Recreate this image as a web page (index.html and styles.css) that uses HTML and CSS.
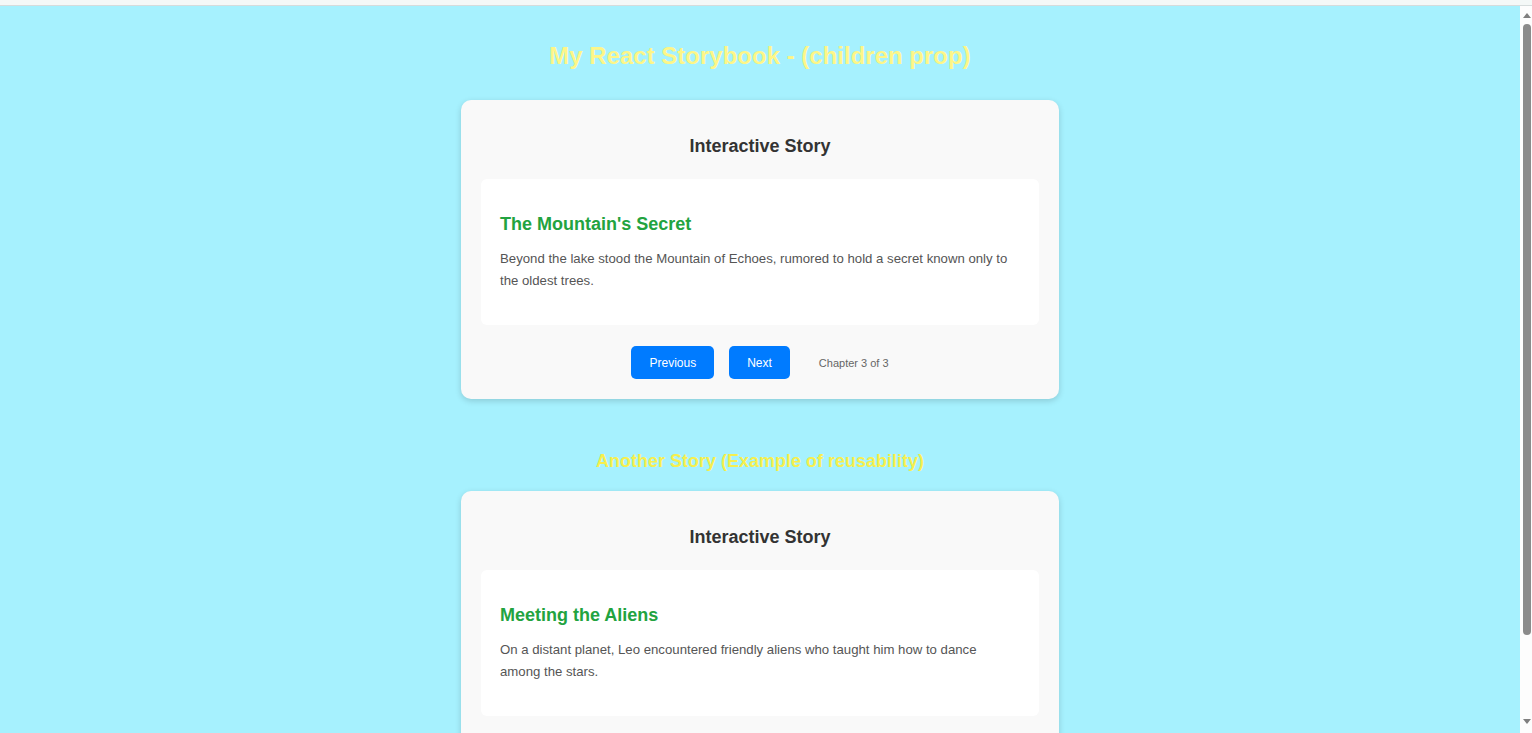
FILE: index.html
```html
<!DOCTYPE html>
<html lang="en">
<head>
<meta charset="utf-8">
<title>My React Storybook</title>
<link rel="stylesheet" href="styles.css">
</head>
<body>
  <div class="chrome-top"></div>
  <div class="frame">
    <main class="page">
      <div class="app">
        <h1 class="app-title">My React Storybook - (children prop)</h1>

        <section class="story-card">
          <h2 class="story-card-title">Interactive Story</h2>
          <div class="chapter">
            <h3 class="chapter-title">The Mountain's Secret</h3>
            <p class="chapter-text">Beyond the lake stood the Mountain of Echoes, rumored to hold a secret known only to the oldest trees.</p>
          </div>
          <div class="controls">
            <button class="btn">Previous</button>
            <button class="btn">Next</button>
            <span class="progress">Chapter 3 of 3</span>
          </div>
        </section>

        <h2 class="section-title">Another Story (Example of reusability)</h2>

        <section class="story-card story-card-below-fold">
          <h2 class="story-card-title">Interactive Story</h2>
          <div class="chapter">
            <h3 class="chapter-title">Meeting the Aliens</h3>
            <p class="chapter-text">On a distant planet, Leo encountered friendly aliens who taught him how to dance among the stars.</p>
          </div>
        </section>
      </div>
    </main>
    <div class="scrollbar">
      <div class="sb-btn"><span class="sb-arrow-up"></span></div>
      <div class="sb-track"><div class="sb-thumb"></div></div>
      <div class="sb-btn sb-btn-down"><span class="sb-arrow-down"></span></div>
    </div>
  </div>
</body>
</html>
```
FILE: styles.css
```css
html, body {
  margin: 0;
  padding: 0;
  height: 100%;
}

body {
  display: flex;
  flex-direction: column;
  overflow: hidden;
  font-family: "Liberation Sans", Arial, sans-serif;
  background: #a6f1fe;
}

.chrome-top {
  height: 5px;
  flex: 0 0 auto;
  background: #f4f8f7;
  border-bottom: 1px solid #d6dcdc;
}

.frame {
  flex: 1 1 auto;
  display: flex;
  min-height: 0;
}

.page {
  flex: 1 1 auto;
  overflow: hidden;
  background: #a6f1fe;
}

.app {
  display: flex;
  flex-direction: column;
  align-items: center;
  padding-top: 36px;
}

.app-title {
  margin: 0;
  font-size: 24px;
  line-height: 28px;
  font-weight: bold;
  color: #fdf688;
}

.section-title {
  margin: 52px 0 0;
  font-size: 18px;
  line-height: 21px;
  font-weight: bold;
  color: #f6ef4e;
}

.story-card {
  box-sizing: border-box;
  width: 598px;
  margin-top: 30px;
  padding: 20px;
  background: #f9f9f9;
  border-radius: 10px;
  box-shadow: 0 2px 6px rgba(0, 0, 0, 0.16);
}

.section-title + .story-card {
  margin-top: 19px;
}

.story-card-below-fold {
  padding-bottom: 74px;
}

.story-card-title {
  margin: 16px 0 22px;
  text-align: center;
  font-size: 18px;
  line-height: 21px;
  font-weight: bold;
  color: #333333;
}

.chapter {
  background: #ffffff;
  border-radius: 6px;
  padding: 20px 19px;
}

.chapter-title {
  margin: 15px 0 13px;
  font-size: 18px;
  line-height: 21px;
  font-weight: bold;
  color: #22a340;
}

.chapter-text {
  margin: 0 0 13px;
  font-size: 13.2px;
  line-height: 22px;
  color: #555555;
}

.controls {
  display: flex;
  justify-content: center;
  align-items: center;
  gap: 15px;
  margin-top: 21px;
}

.btn {
  font-family: "Liberation Sans", Arial, sans-serif;
  font-size: 12px;
  line-height: 15px;
  padding: 10px 18px 8px;
  border: none;
  border-radius: 5px;
  background: #007bff;
  color: #ffffff;
}

.progress {
  margin-left: 14px;
  font-size: 11px;
  color: #666666;
}

.scrollbar {
  flex: 0 0 12px;
  width: 12px;
  display: flex;
  flex-direction: column;
  background: #fdfdfd;
}

.sb-btn {
  height: 18px;
  flex: 0 0 18px;
  display: flex;
  justify-content: center;
  align-items: center;
}

.sb-btn-down {
  height: 15px;
  flex: 0 0 15px;
  align-items: flex-start;
}

.sb-arrow-up {
  width: 0;
  height: 0;
  margin-left: 1px;
  border-left: 4px solid transparent;
  border-right: 4px solid transparent;
  border-bottom: 5px solid #7f7f7f;
}

.sb-arrow-down {
  width: 0;
  height: 0;
  margin-left: 1px;
  margin-top: 1px;
  border-left: 4px solid transparent;
  border-right: 4px solid transparent;
  border-top: 5px solid #7f7f7f;
}

.sb-track {
  flex: 1 1 auto;
  display: flex;
  flex-direction: column;
}

.sb-thumb {
  width: 8px;
  height: 611px;
  margin-left: 3px;
  border-radius: 4px;
  background: #8b8b8b;
}
```
